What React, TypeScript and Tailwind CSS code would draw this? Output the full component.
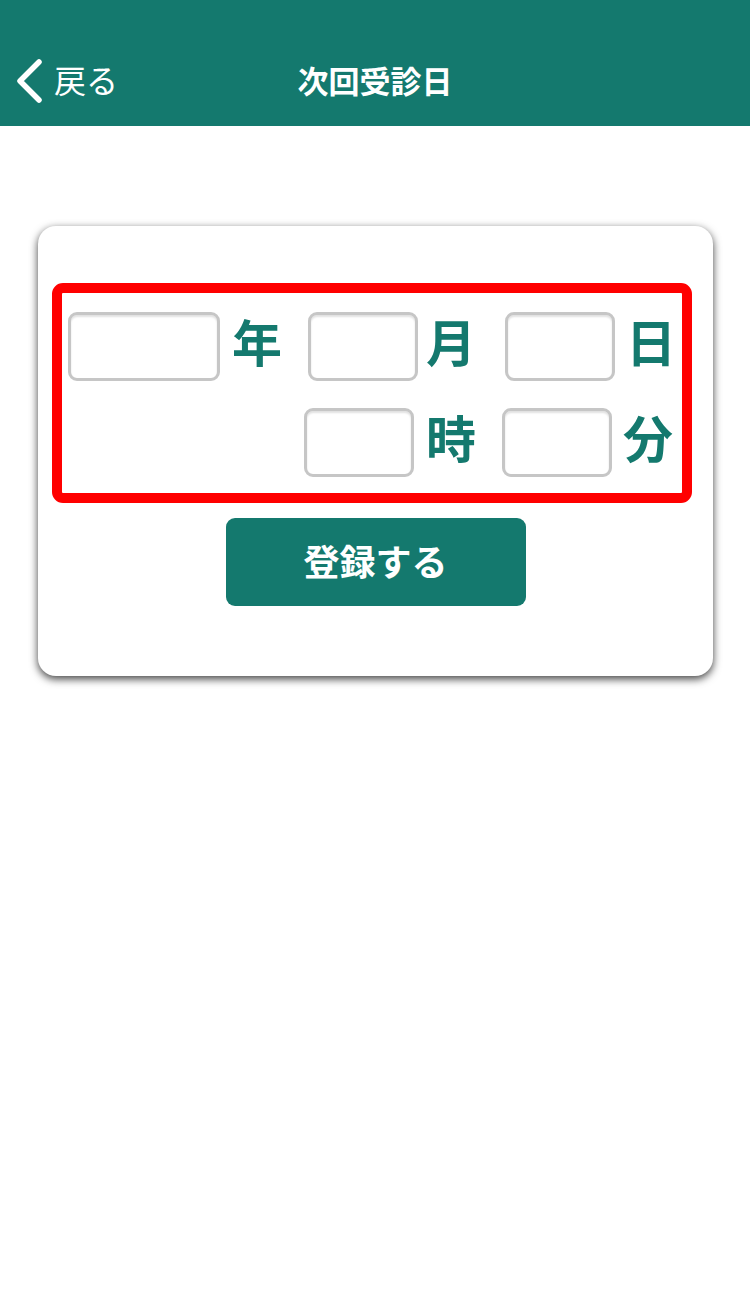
import React from "react";

const TEAL = "text-[#14796e]";

function Box({ w }: { w: string }) {
  return (
    <div
      className={`${w} h-[69px] shrink-0 rounded-[9px] border-[3px] border-[#c6c6c6] bg-white shadow-[inset_0_2px_2px_rgba(0,0,0,0.12)]`}
    />
  );
}

function Label({ t, className = "" }: { t: string; className?: string }) {
  return (
    <span
      className={`w-[48px] shrink-0 text-center text-[50px] leading-none font-bold ${TEAL} -mt-[13px] ${className}`}
    >
      {t}
    </span>
  );
}

export default function App() {
  return (
    <div
      className="w-[750px] min-h-[1292px] bg-white"
      style={{ fontFamily: '"Noto Sans CJK JP", "Noto Sans", sans-serif' }}
    >
      <header className="h-[126px] bg-[#14796e] pt-[40px]">
        <div className="relative h-[86px] flex items-center justify-center">
          <div className="absolute left-[14px] top-0 h-full flex items-center">
            <svg width="30" height="44" viewBox="0 0 30 44" className="-mt-[4px]">
              <polyline
                points="25,3 6,22 25,41"
                fill="none"
                stroke="white"
                strokeWidth="5.5"
                strokeLinecap="round"
                strokeLinejoin="round"
              />
            </svg>
            <span className="ml-[10px] -mt-[8px] text-[32px] leading-none text-white font-normal">戻る</span>
          </div>
          <h1 className="-mt-[8px] text-[31px] leading-none font-bold text-white">次回受診日</h1>
        </div>
      </header>

      <div className="mt-[100px] ml-[38px] w-[675px] h-[450px] rounded-[18px] bg-white shadow-[0_3px_9px_rgba(0,0,0,0.75)] pt-[57px] pl-[14px]">
        <div className="w-[640px] h-[220px] rounded-[11px] border-[10px] border-[#ff0000] pt-[19px]">
          <div className="flex items-center h-[69px]">
            <div className="ml-[6px]" />
            <Box w="w-[152px]" />
            <Label t="年" className="ml-[12px]" />
            <div className="ml-[28px]" />
            <Box w="w-[110px]" />
            <Label t="月" className="ml-[8px]" />
            <div className="ml-[31px]" />
            <Box w="w-[110px]" />
            <Label t="日" className="ml-[11px]" />
          </div>
          <div className="flex items-center h-[69px] mt-[27px]">
            <div className="ml-[242px]" />
            <Box w="w-[110px]" />
            <Label t="時" className="ml-[12px]" />
            <div className="ml-[28px]" />
            <Box w="w-[110px]" />
            <Label t="分" className="ml-[11px]" />
          </div>
        </div>
        <div className="mt-[15px] flex justify-center pr-[14px]">
          <button className="w-[300px] h-[88px] rounded-[9px] bg-[#14796e] text-white text-[36px] font-semibold leading-none pb-[4px]">
            登録する
          </button>
        </div>
      </div>
    </div>
  );
}
